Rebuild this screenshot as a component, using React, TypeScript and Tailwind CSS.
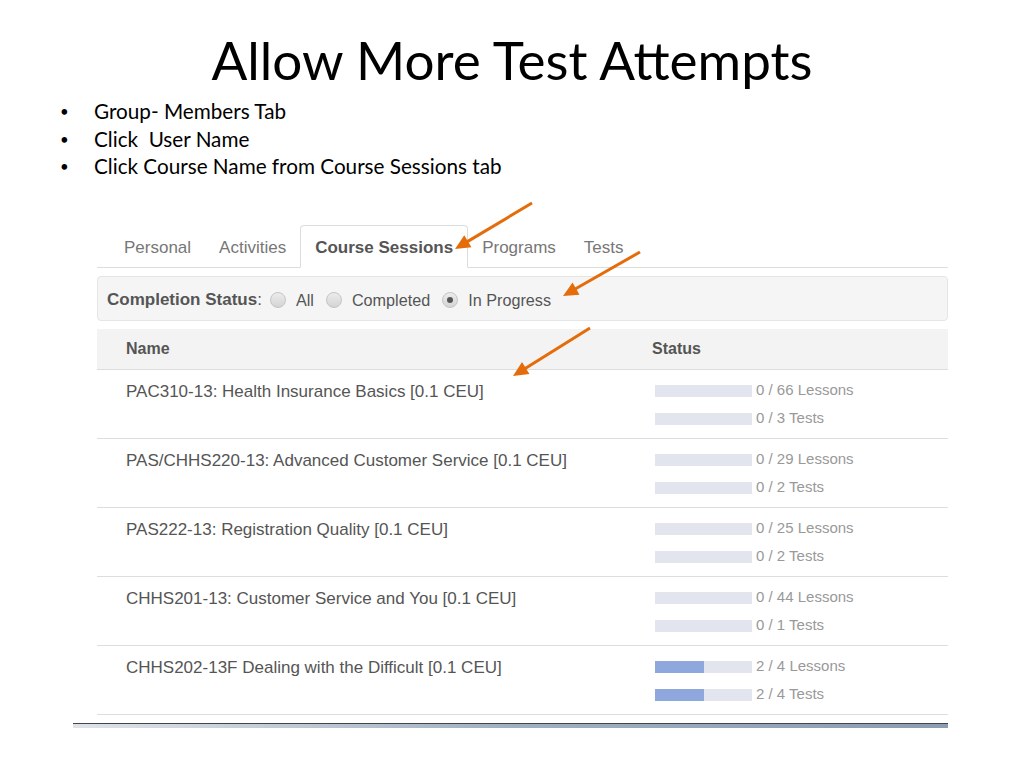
import React from 'react';

const slideFont = { fontFamily: 'Lato, "Open Sans", sans-serif' };
const webFont = { fontFamily: '"Liberation Sans", Arial, sans-serif' };

const tabs = ['Personal', 'Activities', 'Course Sessions', 'Programs', 'Tests'];

const sessions = [
  { name: 'PAC310-13: Health Insurance Basics [0.1 CEU]', lessons: [0, 66], tests: [0, 3] },
  { name: 'PAS/CHHS220-13: Advanced Customer Service [0.1 CEU]', lessons: [0, 29], tests: [0, 2] },
  { name: 'PAS222-13: Registration Quality [0.1 CEU]', lessons: [0, 25], tests: [0, 2] },
  { name: 'CHHS201-13: Customer Service and You [0.1 CEU]', lessons: [0, 44], tests: [0, 1] },
  { name: 'CHHS202-13F Dealing with the Difficult [0.1 CEU]', lessons: [2, 4], tests: [2, 4] },
];

const bullets = ['Group- Members Tab', 'Click\u00a0 User Name', 'Click Course Name from Course Sessions tab'];

function Bar({ done, total, label }: { done: number; total: number; label: string }) {
  return (
    <div className="flex items-center h-[28px]">
      <div className="w-[97px] h-[12px] bg-[#e2e5ed]">
        <div className="h-full bg-[#8ea8de]" style={{ width: `${(done / total) * 100}%` }} />
      </div>
      <span className="ml-[4px] text-[15px] text-[#999]">
        {done} / {total} {label}
      </span>
    </div>
  );
}

function Radio({ checked }: { checked?: boolean }) {
  return (
    <span className="inline-flex items-center justify-center w-[16px] h-[16px] rounded-full border border-[#c4c4c4] bg-gradient-to-b from-[#ececec] to-[#d4d4d4]">
      {checked && <span className="w-[6px] h-[6px] rounded-full bg-[#555]" />}
    </span>
  );
}

function Arrow({ x1, y1, x2, y2 }: { x1: number; y1: number; x2: number; y2: number }) {
  const a = Math.atan2(y2 - y1, x2 - x1);
  const len = 15;
  const w = 7;
  const bx = x2 - Math.cos(a) * len;
  const by = y2 - Math.sin(a) * len;
  const p1 = `${bx + Math.sin(a) * w},${by - Math.cos(a) * w}`;
  const p2 = `${bx - Math.sin(a) * w},${by + Math.cos(a) * w}`;
  return (
    <g>
      <line x1={x1} y1={y1} x2={bx + Math.cos(a) * 3} y2={by + Math.sin(a) * 3} stroke="#e46c0a" strokeWidth={3} />
      <polygon points={`${x2},${y2} ${p1} ${p2}`} fill="#e46c0a" />
    </g>
  );
}

export default function App() {
  return (
    <div className="relative w-[1024px] h-[768px] bg-white overflow-hidden">
      <div style={slideFont} className="pt-[20px] text-center text-[53px] leading-[80px] text-black">
        Allow More Test Attempts
      </div>

      <ul style={slideFont} className="mt-[-2px] ml-[60px] text-[20.7px] leading-[27.5px] text-black">
        {bullets.map((b) => (
          <li key={b} className="flex items-center">
            <span className="w-[34px] text-[15px]">•</span>
            {b}
          </li>
        ))}
      </ul>

      <div style={webFont} className="ml-[97px] mt-[44px] w-[851px]">
        <div className="flex h-[43px] pl-[13px] border-b border-[#ddd]">
          {tabs.map((t) => {
            const active = t === 'Course Sessions';
            return (
              <div
                key={t}
                className={
                  active
                    ? 'px-[14px] pt-[9px] text-[17px] font-bold text-[#555] bg-white border border-[#ddd] border-b-white rounded-t-[4px] mb-[-1px]'
                    : 'px-[14px] pt-[10px] text-[17px] text-[#777]'
                }
              >
                {t}
              </div>
            );
          })}
        </div>

        <div className="mt-[8px] h-[45px] flex items-center pl-[9px] pt-[4px] bg-[#f5f5f5] border border-[#e5e5e5] rounded-[4px] text-[16.2px] text-[#555]">
          <span className="font-bold text-[17px] mr-[8px]">Completion Status<span className="font-normal">:</span></span>
          <Radio />
          <span className="ml-[10px] mr-[12px]">All</span>
          <Radio />
          <span className="ml-[10px] mr-[12px]">Completed</span>
          <Radio checked />
          <span className="ml-[10px]">In Progress</span>
        </div>

        <div className="mt-[8px] flex h-[41px] items-center bg-[#f3f3f3] border-b border-[#ddd] text-[16px] font-bold text-[#555]">
          <div className="w-[555px] pl-[29px]">Name</div>
          <div>Status</div>
        </div>

        {sessions.map((s) => (
          <div key={s.name} className="flex h-[69px] border-b border-[#ddd]">
            <div className="w-[558px] pl-[29px] pt-[9px] text-[17px] text-[#555]">{s.name}</div>
            <div className="pt-[7px]">
              <Bar done={s.lessons[0]} total={s.lessons[1]} label="Lessons" />
              <Bar done={s.tests[0]} total={s.tests[1]} label="Tests" />
            </div>
          </div>
        ))}
      </div>

      <div className="ml-[73px] mt-[8px] w-[875px] h-[5px] border-t border-[#444] bg-gradient-to-r from-[#dfe3e8] via-[#9fb0c2] to-[#8a9db2]" />

      <svg className="absolute inset-0 pointer-events-none" width={1024} height={768}>
        <Arrow x1={532} y1={203} x2={455} y2={249} />
        <Arrow x1={640} y1={252} x2={563} y2={296} />
        <Arrow x1={590} y1={328} x2={513} y2={376} />
      </svg>
    </div>
  );
}
